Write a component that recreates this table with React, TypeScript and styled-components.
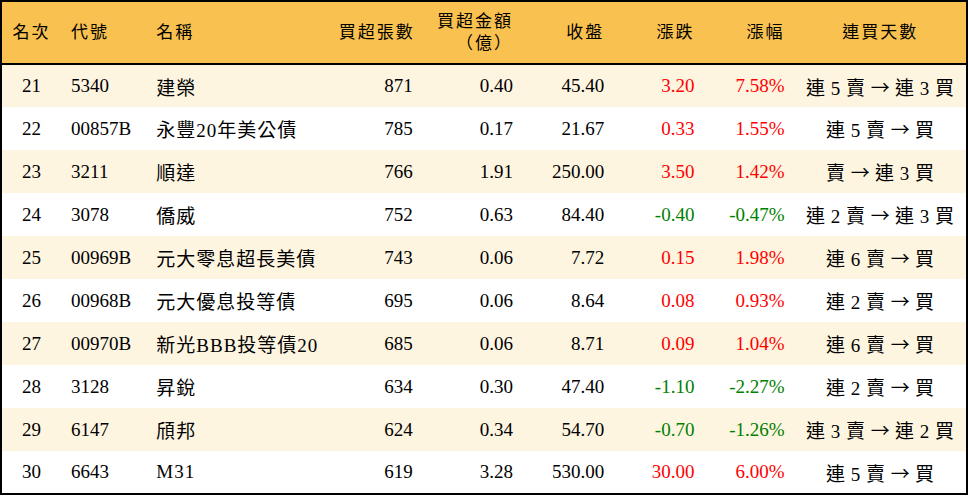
import React from "react";
import styled, { createGlobalStyle } from "styled-components";

const Global = createGlobalStyle`
  html, body { margin: 0; padding: 0; background: #ffffff; }
  body { font-family: "Liberation Serif", "Noto Sans CJK TC", serif; }
`;

type Align = "left" | "right" | "center";
type Tone = "up" | "down" | "plain";

const Table = styled.table`
  width: 968px;
  border-collapse: collapse;
  table-layout: fixed;
  border: 2px solid #000;
  font-family: "Liberation Serif", "Noto Sans CJK TC", serif;
  color: #000;
`;

const HeadRow = styled.tr`
  background: #f9c14f;
  border-bottom: 2px solid #000;
`;

const HeadCell = styled.th<{ $align: Align }>`
  height: 63px;
  padding: 0 10px;
  box-sizing: border-box;
  text-align: ${(p) => p.$align};
  font-weight: 400;
  font-size: 17px;
  line-height: 22px;
  letter-spacing: 2px;
  white-space: nowrap;
  vertical-align: middle;
`;

const Row = styled.tr<{ $alt: boolean }>`
  background: ${(p) => (p.$alt ? "#fef5e1" : "#ffffff")};
`;

const Cell = styled.td<{ $align: Align; $tone?: Tone; $spacing?: number }>`
  height: 43px;
  padding: 0 10px;
  box-sizing: border-box;
  text-align: ${(p) => p.$align};
  font-size: 19px;
  letter-spacing: ${(p) => p.$spacing ?? 0}px;
  white-space: nowrap;
  vertical-align: middle;
  color: ${(p) =>
    p.$tone === "up" ? "#ff0000" : p.$tone === "down" ? "#008000" : "#000"};
`;

const Arrow = styled.span`
  font-family: "Noto Sans CJK TC", sans-serif;
  font-size: 19px;
  letter-spacing: 0;
`;

type Rec = {
  rank: number;
  code: string;
  name: string;
  qty: string;
  amt: string;
  close: string;
  chg: string;
  pct: string;
  from: string;
  to: string;
};

const rows: Rec[] = [
  { rank: 21, code: "5340", name: "建榮", qty: "871", amt: "0.40", close: "45.40", chg: "3.20", pct: "7.58%", from: "連 5 賣", to: "連 3 買" },
  { rank: 22, code: "00857B", name: "永豐20年美公債", qty: "785", amt: "0.17", close: "21.67", chg: "0.33", pct: "1.55%", from: "連 5 賣", to: "買" },
  { rank: 23, code: "3211", name: "順達", qty: "766", amt: "1.91", close: "250.00", chg: "3.50", pct: "1.42%", from: "賣", to: "連 3 買" },
  { rank: 24, code: "3078", name: "僑威", qty: "752", amt: "0.63", close: "84.40", chg: "-0.40", pct: "-0.47%", from: "連 2 賣", to: "連 3 買" },
  { rank: 25, code: "00969B", name: "元大零息超長美債", qty: "743", amt: "0.06", close: "7.72", chg: "0.15", pct: "1.98%", from: "連 6 賣", to: "買" },
  { rank: 26, code: "00968B", name: "元大優息投等債", qty: "695", amt: "0.06", close: "8.64", chg: "0.08", pct: "0.93%", from: "連 2 賣", to: "買" },
  { rank: 27, code: "00970B", name: "新光BBB投等債20", qty: "685", amt: "0.06", close: "8.71", chg: "0.09", pct: "1.04%", from: "連 6 賣", to: "買" },
  { rank: 28, code: "3128", name: "昇銳", qty: "634", amt: "0.30", close: "47.40", chg: "-1.10", pct: "-2.27%", from: "連 2 賣", to: "買" },
  { rank: 29, code: "6147", name: "頎邦", qty: "624", amt: "0.34", close: "54.70", chg: "-0.70", pct: "-1.26%", from: "連 3 賣", to: "連 2 買" },
  { rank: 30, code: "6643", name: "M31", qty: "619", amt: "3.28", close: "530.00", chg: "30.00", pct: "6.00%", from: "連 5 賣", to: "買" },
];

const widths = [60, 85, 182, 94, 100, 91, 90, 90, 172];

export default function App() {
  return (
    <>
      <Global />
      <Table>
        <colgroup>
          {widths.map((w, i) => (
            <col key={i} style={{ width: w }} />
          ))}
        </colgroup>
        <thead>
          <HeadRow>
            <HeadCell $align="center">名次</HeadCell>
            <HeadCell $align="left">代號</HeadCell>
            <HeadCell $align="left">名稱</HeadCell>
            <HeadCell $align="right">買超張數</HeadCell>
            <HeadCell $align="right">
              買超金額
              <br />
              （億）
            </HeadCell>
            <HeadCell $align="right">收盤</HeadCell>
            <HeadCell $align="right">漲跌</HeadCell>
            <HeadCell $align="right">漲幅</HeadCell>
            <HeadCell $align="center">連買天數</HeadCell>
          </HeadRow>
        </thead>
        <tbody>
          {rows.map((r, i) => {
            const tone: Tone = r.chg.startsWith("-") ? "down" : "up";
            return (
              <Row key={r.rank} $alt={i % 2 === 0}>
                <Cell $align="center">{r.rank}</Cell>
                <Cell $align="left">{r.code}</Cell>
                <Cell $align="left" $spacing={1}>
                  {r.name}
                </Cell>
                <Cell $align="right">{r.qty}</Cell>
                <Cell $align="right">{r.amt}</Cell>
                <Cell $align="right">{r.close}</Cell>
                <Cell $align="right" $tone={tone}>
                  {r.chg}
                </Cell>
                <Cell $align="right" $tone={tone}>
                  {r.pct}
                </Cell>
                <Cell $align="center" $spacing={0.5}>
                  {r.from} <Arrow>→</Arrow> {r.to}
                </Cell>
              </Row>
            );
          })}
        </tbody>
      </Table>
    </>
  );
}
